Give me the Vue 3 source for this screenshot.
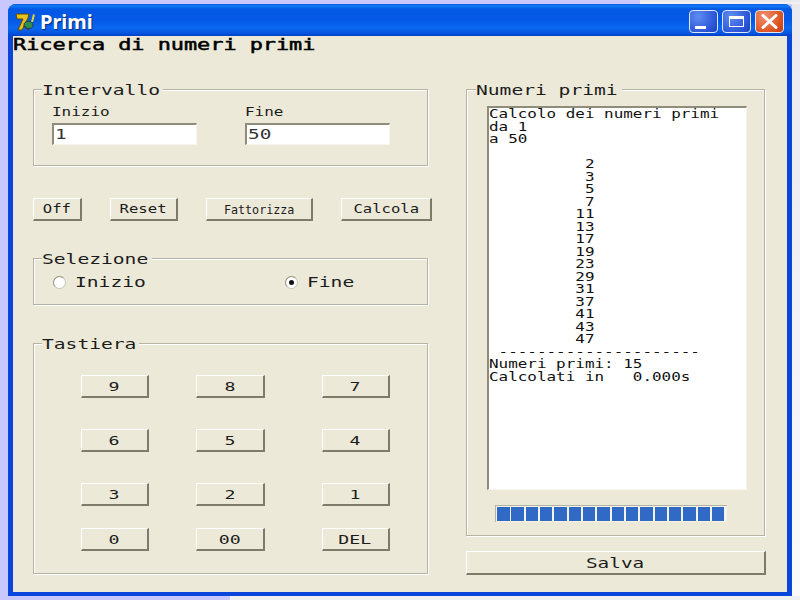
<script setup>
const keys = ['9', '8', '7', '6', '5', '4', '3', '2', '1', '0', '00', 'DEL']
const actions = [
  { label: 'Off', cls: 'a-off' },
  { label: 'Reset', cls: 'a-reset' },
  { label: 'Fattorizza', cls: 'a-fatt' },
  { label: 'Calcola', cls: 'a-calc' }
]
const segments = Array.from({ length: 16 }, (_, i) => i)
const output = `Calcolo dei numeri primi
da 1
a 50

          2
          3
          5
          7
         11
         13
         17
         19
         23
         29
         31
         37
         41
         43
         47
 ---------------------
Numeri primi: 15
Calcolati in   0.000s`
</script>

<template>
  <div class="desktop">
    <div class="window">
      <header class="titlebar">
        <svg class="appicon" width="21" height="20" viewBox="0 0 21 20">
          <path d="M1 2 L14 2 L13 6 L7 18 L3 18 L8 7 L2 7 Z" fill="#e8c21a" stroke="#5a4a08" stroke-width="1" />
          <ellipse cx="13.5" cy="13" rx="4.5" ry="3.6" fill="#2f8f4a" stroke="#1c3f5a" stroke-width="1" />
          <path d="M16 10 L18 2 L20 3 L18 10 Z" fill="#d9d23a" />
          <path d="M10 14 L13 18 L15 16" fill="none" stroke="#3a3a3a" stroke-width="1" />
        </svg>
        <span class="title">Primi</span>
        <div class="controls">
          <div class="ctl ctl-min"><i class="min-bar"></i></div>
          <div class="ctl ctl-max"><i class="max-box"></i></div>
          <div class="ctl ctl-close">
            <svg width="17" height="15" viewBox="0 0 17 15">
              <path d="M2 1.5 L15 13.5 M15 1.5 L2 13.5" stroke="#fff" stroke-width="3" stroke-linecap="round" />
            </svg>
          </div>
        </div>
      </header>

      <main class="client">
        <h1 class="heading"><span class="st heading-text">Ricerca di numeri primi</span></h1>

        <div class="columns">
          <section class="left">
            <div class="group g-range">
              <span class="legend lg-range"><span class="st">Intervallo</span></span>
              <div class="field">
                <span class="st small">Inizio</span>
                <div class="input"><span class="st value">1</span></div>
              </div>
              <div class="field">
                <span class="st small">Fine</span>
                <div class="input"><span class="st value">50</span></div>
              </div>
            </div>

            <div class="actions">
              <div v-for="a in actions" :key="a.label" class="btn" :class="a.cls">
                <span class="ct small-btn" :class="{ plain: a.label === 'Fattorizza' }">{{ a.label }}</span>
              </div>
            </div>

            <div class="group g-select">
              <span class="legend lg-select"><span class="st">Selezione</span></span>
              <div class="opt opt-a">
                <i class="radio"></i><span class="st">Inizio</span>
              </div>
              <div class="opt">
                <i class="radio on"></i><span class="st">Fine</span>
              </div>
            </div>

            <div class="group g-keys">
              <span class="legend lg-keys"><span class="st">Tastiera</span></span>
              <div class="keys">
                <div v-for="k in keys" :key="k" class="btn key">
                  <span class="ct key-text">{{ k }}</span>
                </div>
              </div>
            </div>
          </section>

          <section class="right">
            <div class="group g-out">
              <span class="legend lg-out"><span class="st">Numeri primi</span></span>
              <div class="output"><pre class="st out-text">{{ output }}</pre></div>
              <div class="progress">
                <i v-for="s in segments" :key="s" class="seg"></i>
              </div>
            </div>
            <div class="btn save"><span class="ct big">Salva</span></div>
          </section>
        </div>
      </main>
    </div>
  </div>
</template>

<style>
html, body { margin: 0; padding: 0; overflow: hidden; }
</style>

<style scoped>
.desktop {
  width: 800px;
  height: 600px;
  box-sizing: border-box;
  padding: 4px 8px 4px 8px;
  background:
    linear-gradient(#f0f0f0, #f0f0f0) 230px 596px / 570px 4px no-repeat,
    linear-gradient(#e6e6ea, #f4f4f4) 640px 0 / 160px 4px no-repeat,
    linear-gradient(#e8e8ee, #fafafa) 792px 0 / 8px 600px no-repeat,
    #c8c8ff;
  font-family: "DejaVu Sans Mono", monospace;
  color: #1c1c1c;
}
.window {
  width: 784px;
  height: 592px;
  box-sizing: border-box;
  display: flex;
  flex-direction: column;
  border-radius: 8px 8px 0 0;
  background: #0a46dc;
  overflow: hidden;
}
.titlebar {
  height: 32px;
  flex: none;
  display: flex;
  align-items: center;
  padding-left: 7px;
  padding-right: 8px;
  background: linear-gradient(#0a5ae6 0, #0f7bf5 2px, #0458e4 5px, #0459e6 16px, #0a68f0 24px, #0556e0 29px, #0340c8 32px);
}
.appicon { margin-top: 3px; flex: none; }
.title {
  margin-left: 4px;
  margin-top: 3px;
  font: bold 20px/22px "Noto Sans", "Liberation Sans", sans-serif;
  color: #fff;
  text-shadow: 1px 1px 1px #0a2a80;
}
.controls {
  margin-left: auto;
  margin-top: 3px;
  display: flex;
  gap: 4px;
}
.ctl {
  width: 29px;
  height: 23px;
  box-sizing: border-box;
  border: 1px solid #dfe8fb;
  border-radius: 4px;
  display: flex;
  align-items: center;
  justify-content: center;
  background: radial-gradient(circle at 30% 25%, #5f8cf0, #2a55d8 70%, #1c40b8);
}
.ctl-close {
  background: radial-gradient(circle at 30% 25%, #f09070, #e05a28 60%, #c23810);
}
.min-bar {
  width: 11px;
  height: 3px;
  background: #fff;
  margin: 11px 7px 0 0;
}
.max-box {
  width: 15px;
  height: 11px;
  box-sizing: border-box;
  border: 1px solid #fff;
  border-top-width: 3px;
}

.client {
  flex: 1;
  margin: 0 5px 4px 5px;
  background: #ece9d8;
  display: flex;
  flex-direction: column;
}
.heading {
  margin: 0;
  height: 53px;
  flex: none;
  font-size: 16px;
  font-weight: 400;
  line-height: 18px;
  color: #000;
}
.st {
  display: inline-block;
  transform: scaleX(1.4);
  transform-origin: left center;
  white-space: pre;
  font-size: 14px;
}
.heading-text {
  font-size: 16px;
  transform: scaleX(1.365);
  -webkit-text-stroke: 0.5px #000;
}

.columns {
  display: flex;
  gap: 38px;
  padding-left: 20px;
}
.left { width: 395px; display: flex; flex-direction: column; }
.right { width: 299px; display: flex; flex-direction: column; }

.group {
  position: relative;
  box-sizing: border-box;
  border: 1px solid #b5b3a4;
  box-shadow: 1px 1px 0 #fff, inset 1px 1px 0 #fff;
}
.legend {
  position: absolute;
  top: -9px;
  left: 8px;
  height: 17px;
  line-height: 17px;
  background: #ece9d8;
  box-sizing: border-box;
  padding-right: 2px;
}
.lg-range { width: 121px; }
.lg-select { width: 110px; }
.lg-keys { width: 97px; }
.lg-out { width: 146px; left: 9px; }

.g-range {
  height: 77px;
  display: grid;
  grid-template-columns: 193px 145px;
  padding: 15px 0 0 18px;
}
.field { display: flex; flex-direction: column; }
.small {
  font-size: 12px;
  line-height: 15px;
  height: 18px;
  transform: scaleX(1.33);
}
.input {
  width: 145px;
  height: 22px;
  box-sizing: border-box;
  background: #fff;
  border-top: 2px solid #8f8c7c;
  border-left: 2px solid #8f8c7c;
  border-right: 1px solid #f6f5ee;
  border-bottom: 1px solid #f6f5ee;
  padding-left: 1px;
  line-height: 18px;
}
.value { font-size: 14px; transform: scaleX(1.38); color: #333; }

.actions {
  margin-top: 32px;
  display: flex;
  flex: none;
  height: 23px;
  width: 399px;
}
.btn {
  box-sizing: border-box;
  height: 23px;
  display: flex;
  align-items: center;
  justify-content: center;
  background: #ece9d8;
  border-top: 1px solid #fff;
  border-left: 1px solid #fff;
  border-right: 2px solid #7d7b6c;
  border-bottom: 2px solid #7d7b6c;
}
.a-off { width: 49px; }
.a-reset { width: 68px; margin-left: 28px; }
.a-fatt { width: 107px; margin-left: 28px; }
.a-calc { width: 91px; margin-left: 28px; }
.ct { display: inline-block; white-space: pre; transform-origin: center; }
.small-btn { font-size: 12px; transform: scaleX(1.3); }
.small-btn.plain { font-size: 13px; transform: scaleX(0.9); }
.key-text { font-size: 13px; transform: scaleX(1.4); }
.big { font-size: 14px; transform: scaleX(1.38); }

.g-select {
  margin-top: 37px;
  height: 47px;
  display: grid;
  grid-template-columns: 232px 1fr;
  padding: 14px 0 0 19px;
}
.opt { display: flex; align-items: center; height: 18px; }
.opt .st { margin-left: 9px; letter-spacing: 0; }
.radio {
  width: 13px;
  height: 13px;
  box-sizing: border-box;
  border-radius: 50%;
  background: #fff;
  border: 1px solid #c6c4b6;
  border-top-color: #8e8c7e;
  border-left-color: #8e8c7e;
  display: flex;
  align-items: center;
  justify-content: center;
}
.radio.on::after {
  content: "";
  width: 5px;
  height: 5px;
  border-radius: 50%;
  background: #111;
}

.g-keys {
  margin-top: 38px;
  height: 231px;
  padding: 31px 0 0 47px;
}
.keys {
  display: grid;
  grid-template-columns: 115px 126px 68px;
  grid-template-rows: 54px 54px 45px 23px;
}
.key { width: 68px; padding-right: 1px; }
.key:nth-child(3n + 2) { width: 69px; }

.g-out {
  height: 447px;
  padding: 16px 0 0 20px;
}
.output {
  width: 260px;
  height: 384px;
  box-sizing: border-box;
  background: #fff;
  border-top: 2px solid #8f8c7c;
  border-left: 2px solid #8f8c7c;
  border-right: 1px solid #f6f5ee;
  border-bottom: 1px solid #f6f5ee;
  overflow: hidden;
}
.out-text {
  margin: 0;
  font-family: "DejaVu Sans Mono", monospace;
  font-size: 13px;
  line-height: 12.5px;
  transform: scaleX(1.225);
  color: #111;
}
.progress {
  margin: 15px 0 0 8px;
  width: 232px;
  height: 17px;
  box-sizing: border-box;
  padding: 1px 1px;
  background: #f4f3ea;
  border-top: 1px solid #b5b3a4;
  border-left: 1px solid #b5b3a4;
  display: flex;
  gap: 1.83px;
}
.seg { width: 12.5px; height: 100%; background: #316ac5; flex: none; }
.save { margin-top: 15px; height: 24px; width: 300px; }
</style>
